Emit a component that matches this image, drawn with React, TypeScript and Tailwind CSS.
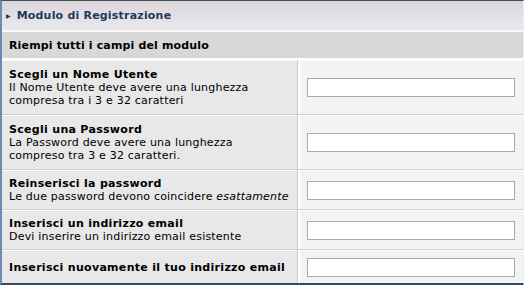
import React from 'react';

type Field = {
  title: string;
  desc?: React.ReactNode;
  type: string;
  height: string;
};

const fields: Field[] = [
  {
    title: 'Scegli un Nome Utente',
    desc: (
      <>
        Il Nome Utente deve avere una lunghezza
        <br />
        compresa tra i 3 e 32 caratteri
      </>
    ),
    type: 'text',
    height: 'h-[55px]',
  },
  {
    title: 'Scegli una Password',
    desc: (
      <>
        La Password deve avere una lunghezza
        <br />
        compreso tra 3 e 32 caratteri.
      </>
    ),
    type: 'password',
    height: 'h-[55px]',
  },
  {
    title: 'Reinserisci la password',
    desc: (
      <>
        Le due password devono coincidere <i>esattamente</i>
      </>
    ),
    type: 'password',
    height: 'h-[40px]',
  },
  {
    title: 'Inserisci un indirizzo email',
    desc: 'Devi inserire un indirizzo email esistente',
    type: 'text',
    height: 'h-[40px]',
  },
  {
    title: 'Inserisci nuovamente il tuo indirizzo email',
    type: 'text',
    height: 'h-[33px]',
  },
];

export default function App() {
  return (
    <div className="w-[524px] h-[285px] overflow-hidden bg-white font-['DejaVu_Sans',Verdana,sans-serif] text-[11px] leading-[13px] text-black">
      <div className="border-t border-[#3e4f58] border-l-2 border-l-[#6b8bb0] border-b-2 border-b-[#2f4b68] border-r border-r-[#e8eef0]">
        {/* Header */}
        <div className="h-[30px] flex items-center pl-[4px] bg-gradient-to-b from-[#dcd6db] to-[#e9e9ed] border-b border-b-[#f4f4f6]">
          <span className="text-[#1e3554] text-[6px] leading-none mr-[6px] mt-[1px]">▶</span>
          <span className="font-bold text-[#22395a] tracking-[0.2px]">Modulo di Registrazione</span>
        </div>

        {/* Section title */}
        <div className="h-[29px] flex items-center pl-[7px] bg-[#d8d8d8] border-t border-t-white border-b-2 border-b-white">
          <span className="font-bold tracking-[0.15px]">Riempi tutti i campi del modulo</span>
        </div>

        {/* Rows */}
        {fields.map((f, i) => (
          <div
            key={i}
            className={`flex ${f.height} ${i < fields.length - 1 ? 'border-b border-b-[#cfcfcf]' : ''}`}
          >
            <div className="w-[295px] bg-[#e8e8e8] pl-[7px] flex flex-col justify-center border-t border-t-white">
              <div className="font-bold tracking-[0.3px]">{f.title}</div>
              {f.desc && <div className="tracking-[0.2px]">{f.desc}</div>}
            </div>
            <div className="w-[1px] bg-[#c8c8c8]" />
            <div className="w-[2px] bg-white" />
            <div className="flex-1 bg-[#f3f3f3] flex items-center pl-[7px] border-t border-t-white">
              <input
                type={f.type}
                className="w-[208px] h-[19px] bg-white border border-[#a9a9a9] outline-none"
              />
            </div>
          </div>
        ))}
      </div>
    </div>
  );
}
